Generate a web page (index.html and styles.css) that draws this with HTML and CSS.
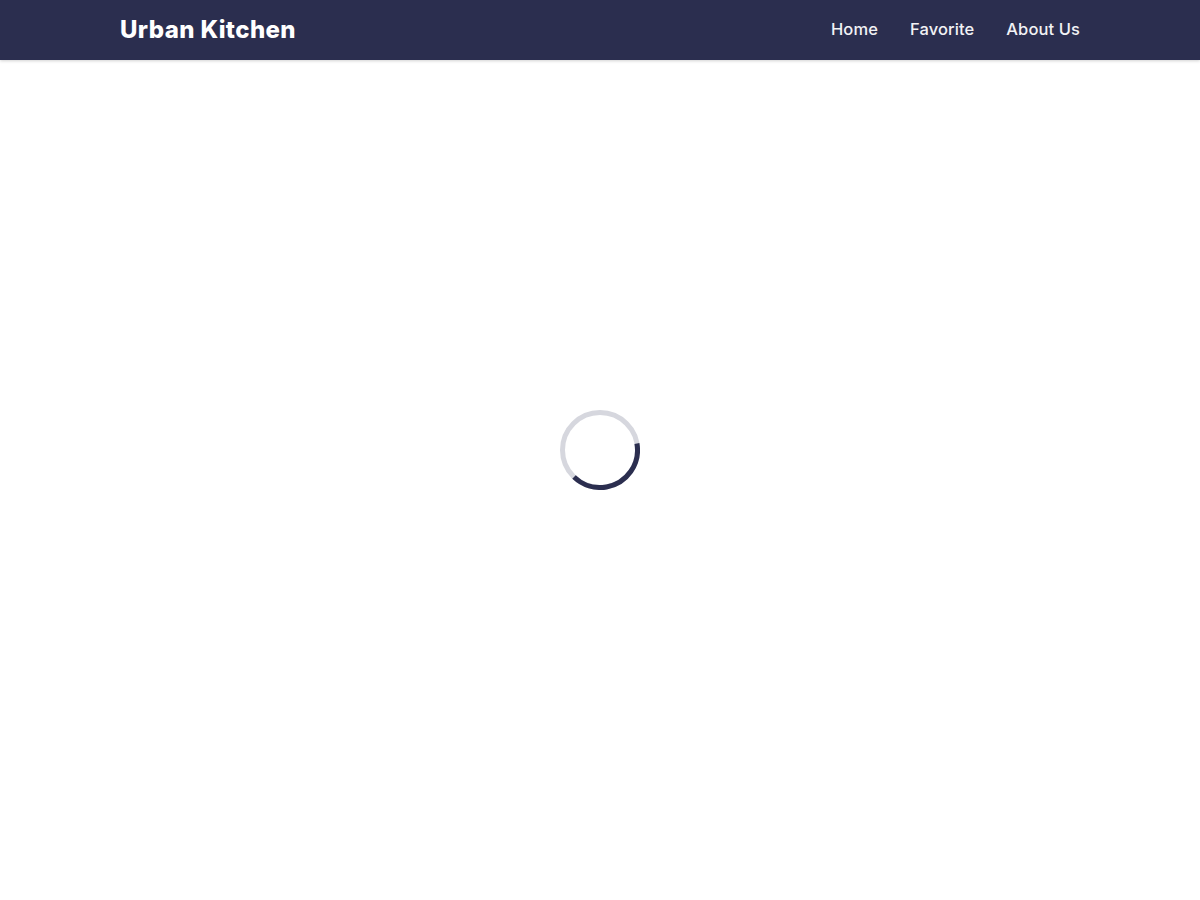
FILE: index.html
```html
<!DOCTYPE html>
<html lang="en">
<head>
<meta charset="utf-8">
<title>Urban Kitchen</title>
<link rel="stylesheet" href="styles.css">
</head>
<body>
<header class="navbar">
  <div class="container">
    <a class="brand" href="#">Urban Kitchen</a>
    <nav class="nav">
      <a class="nav-link" href="#">Home</a>
      <a class="nav-link" href="#">Favorite</a>
      <a class="nav-link" href="#">About Us</a>
    </nav>
  </div>
</header>
<main class="content">
  <div class="loader" role="status" aria-label="Loading">
    <svg class="spinner" width="80" height="80" viewBox="0 0 80 80">
      <circle class="track" cx="40" cy="40" r="37.5"/>
      <circle class="arc" cx="40" cy="40" r="37.5" transform="rotate(-10 40 40)"/>
    </svg>
  </div>
</main>
</body>
</html>
```
FILE: styles.css
```css
* { box-sizing: border-box; }
html, body { margin: 0; padding: 0; }
body {
  font-family: Inter, "Open Sans", "Liberation Sans", sans-serif;
  background: #ffffff;
  height: 900px;
  display: flex;
  flex-direction: column;
}
.navbar {
  background: #2b2e4f;
  height: 60px;
  box-shadow: 0 1px 3px rgba(0,0,0,0.18);
  position: relative;
  z-index: 1;
}
.container {
  width: 960px;
  margin: 0 auto;
  height: 100%;
  display: flex;
  align-items: center;
  justify-content: space-between;
  padding-bottom: 2px;
}
.brand {
  color: #ffffff;
  text-decoration: none;
  font-weight: 800;
  font-size: 24px;
  letter-spacing: 0.4px;
}
.nav {
  display: flex;
  gap: 32px;
}
.nav-link {
  color: #f2f2f5;
  text-decoration: none;
  font-size: 16.5px;
  font-weight: 500;
  letter-spacing: 0.1px;
}
.content {
  flex: 1;
  display: flex;
  align-items: center;
  justify-content: center;
  padding-bottom: 60px;
}
.spinner { display: block; }
.track {
  fill: none;
  stroke: #d6d7de;
  stroke-width: 5;
}
.arc {
  fill: none;
  stroke: #2b2e4f;
  stroke-width: 5;
  stroke-dasharray: 94 200;
}
```
